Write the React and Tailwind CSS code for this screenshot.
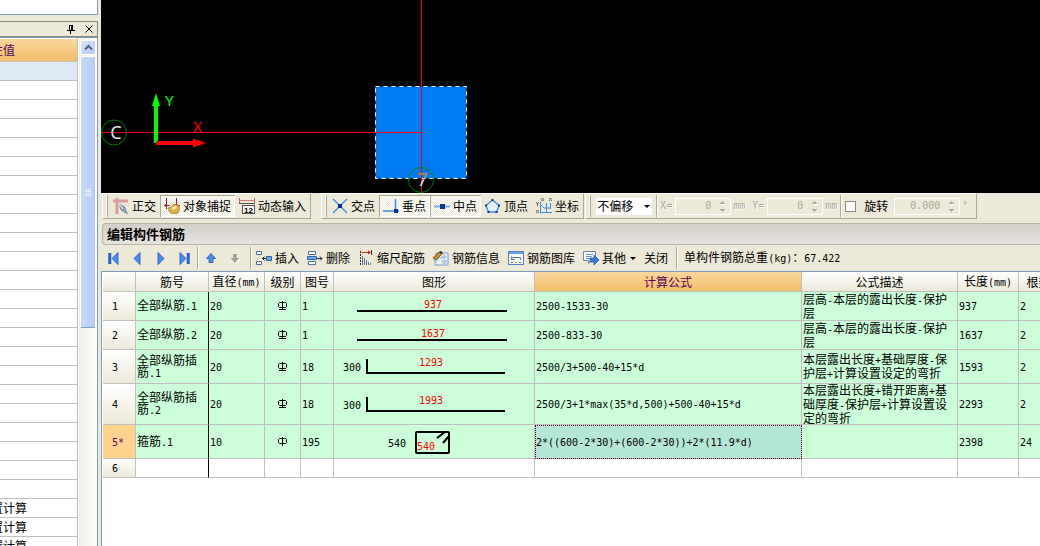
import React, { useState } from "react";

// Latin characters are set half as wide as the Chinese ones
function Txt({ children }) {
  return children
    .split(/([\x20-\x7e]+)/)
    .filter((part) => part !== "")
    .map((part, i) =>
      /^[\x20-\x7e]/.test(part) ? (
        <span key={i} className="font-['DejaVu_Sans_Mono',monospace] text-[10px]">
          {part}
        </span>
      ) : (
        part
      )
    );
}

function Icon({ children }) {
  return (
    <svg className="w-4 h-4 shrink-0" viewBox="0 0 16 16" fill="none" aria-hidden="true">
      {children}
    </svg>
  );
}

const icons = {
  ortho: (
    <Icon>
      <path d="M0 3H15M4 0V16" stroke="#dc9a9a" strokeWidth="3" />
      <path d="M6 6l6 3 1 4 2 3-4-2-3-2z" fill="#8fa3b8" stroke="#5f7488" strokeWidth=".6" />
      <path d="M6 6l4 5" stroke="#fff" />
    </Icon>
  ),
  snap: (
    <Icon>
      <path d="M2.500 0V11M12.500 0V9M0 7.500H6M9 7.500H16" stroke="#8c2f2f" />
      <path d="M1 6l3 1.500-3 1.500zM14 6l-3 1.500 3 1.500z" fill="#8c2f2f" />
      <path d="M4 10l3-1 3-3 4 1 2 3-2 5-6 1-3-3z" fill="#d9b44a" stroke="#9b7a22" strokeWidth=".7" />
      <path d="M7 10l4-2 2 1-3 3z" fill="#f7e9a8" />
    </Icon>
  ),
  dyn: (
    <Icon>
      <path d="M.5 0V6M15.500 0V6" stroke="#c06060" />
      <path d="M0 2.500H16" stroke="#d27c7c" />
      <path d="M0 5.500H16" stroke="#555" />
      <rect x="3.500" y="7.500" width="12" height="8" fill="#f4f4f4" stroke="#555" />
      <text x="5" y="14.500" fontSize="8" fontWeight="bold" fontFamily="Liberation Sans, sans-serif" fill="#000">
        12
      </text>
    </Icon>
  ),
  cross: (
    <Icon>
      <path d="M1 1l14 14M15 1L1 15" stroke="#3a8be0" strokeWidth="1.300" />
      <rect x="6" y="6" width="4" height="4" fill="#0b2f8a" />
    </Icon>
  ),
  perp: (
    <Icon>
      <path d="M0 13H16M12.500 1V13" stroke="#3a8be0" strokeWidth="1.500" />
      <rect x="11" y="11" width="4" height="4" fill="#0b2f8a" />
    </Icon>
  ),
  mid: (
    <Icon>
      <path d="M0 8.500H16" stroke="#6fb0f0" strokeWidth="2" />
      <rect x="6" y="6" width="5" height="5" fill="#0b2f8a" />
    </Icon>
  ),
  vertex: (
    <Icon>
      <path d="M7.500 2L14 7.500 11.500 14H3.500L1 7.500z" stroke="#3a8be0" strokeWidth="1.300" fill="#e4f1fd" />
      <path d="M6.500 1h2v2h-2zM13 6.500h2v2h-2zM10.500 13h2v2h-2zM2.500 13h2v2h-2zM0 6.500h2v2H0z" fill="#0b2f8a" />
    </Icon>
  ),
  coord: (
    <Icon>
      <path d="M4.500 4V15.500M4 14.500H16M4 6l4 4h7M10.500 5V14M14.500 5V11" stroke="#3a8be0" />
      <path d="M0 4l1.500 2L3 4M1.500 6v2M13 0l3 3M16 0l-3 3" stroke="#444" strokeWidth=".8" />
      <circle cx="6.500" cy="1.500" r="1.200" stroke="#444" strokeWidth=".8" />
      <circle cx="1.500" cy="13.500" r="1.200" stroke="#444" strokeWidth=".8" />
    </Icon>
  ),
  first: (
    <Icon>
      <path d="M4 3v11M5.500 3v11" stroke="#2a5fd0" strokeWidth="1.500" />
      <path d="M13 2.500v12L7 8.500z" fill="#4a8df0" stroke="#1c4fc0" strokeWidth=".8" />
    </Icon>
  ),
  prev: (
    <Icon>
      <path d="M11 2.500v12L5 8.500z" fill="#4a8df0" stroke="#1c4fc0" strokeWidth=".8" />
    </Icon>
  ),
  next: (
    <Icon>
      <path d="M5 2.500v12l6-6z" fill="#4a8df0" stroke="#1c4fc0" strokeWidth=".8" />
    </Icon>
  ),
  last: (
    <Icon>
      <path d="M12 3v11M10.500 3v11" stroke="#2a5fd0" strokeWidth="1.500" />
      <path d="M3 2.500v12l6-6z" fill="#4a8df0" stroke="#1c4fc0" strokeWidth=".8" />
    </Icon>
  ),
  up: (
    <Icon>
      <path d="M8 3.500l4.500 5H10v4H6v-4H3.500z" fill="#4a8df0" stroke="#1c4fc0" strokeWidth=".8" />
    </Icon>
  ),
  down: (
    <Icon>
      <path d="M9 14l4.500-5H11V5H7v4H4.500z" fill="#fff" />
      <path d="M8 13l4.500-5H10V4H6v4H3.500z" fill="#a6a294" />
    </Icon>
  ),
  insert: (
    <Icon>
      <path d="M.5 1.500h5v3h-5zM.5 11.500h5v3h-5z" fill="#fff" stroke="#4c6f9c" />
      <path d="M6 8.500h4M8.500 6.500l-2 2 2 2" stroke="#222" />
      <path d="M10.500 6.500h5v4h-5z" fill="#6ea8f0" stroke="#2b5fb0" />
    </Icon>
  ),
  remove: (
    <Icon>
      <path d="M1.500 1.500h7v3h-7zM1.500 11.500h7v3h-7z" fill="#fff" stroke="#4c6f9c" />
      <path d="M.5 6.500h9v3h-9z" fill="#6ea8f0" stroke="#2b5fb0" />
      <path d="M10 8.500h5M13 6.500l2 2-2 2" stroke="#222" />
    </Icon>
  ),
  scale: (
    <Icon>
      <path d="M2.500 1V15" stroke="#333" strokeDasharray="2 1" />
      <path d="M4 2.500h8" stroke="#c02a10" />
      <path d="M10 .5l3 2-3 2z" fill="#c02a10" />
      <path d="M13.500 0v5" stroke="#333" />
      <path d="M4.500 6v9M6.500 8v7M8.500 10v5M10.500 12v3M12.500 13v2" stroke="#5a7a9a" />
    </Icon>
  ),
  info: (
    <Icon>
      <path d="M3 3h12v12H2V8z" fill="#eef4fb" stroke="#7f9cc4" />
      <path d="M3 12l4-5 2 2M8 7h6M8 11h6M11 4v10" stroke="#8fb3e0" />
      <path d="M0 8l6-6 3 2-6 6z" fill="#c58b3a" stroke="#5a3a10" strokeWidth=".7" />
      <path d="M6 2l2-1 2 2-1 1z" fill="#222" />
      <path d="M10 9l4 2-1 4H9z" fill="#b9cbe2" />
    </Icon>
  ),
  library: (
    <Icon>
      <rect x=".5" y="1.500" width="15" height="13" fill="#f6f9fd" stroke="#4f83c4" />
      <path d="M1 3h14" stroke="#6aa0e0" strokeWidth="2" />
      <path d="M3.500 10V6.500M3 7.500h9.500V10M3 9.500h4" stroke="#777" />
      <path d="M3 12.500h2" stroke="#d04040" />
      <path d="M7 12.500h2" stroke="#e0a030" />
      <path d="M11 12.500h2" stroke="#40a060" />
    </Icon>
  ),
  other: (
    <Icon>
      <path d="M.5 1.500h12v9h-4l-3 3v-3h-5z" fill="#f6f9fd" stroke="#6f86a8" />
      <path d="M3 4.500h7M3 6.500h6M3 8.500h4" stroke="#7a9ac8" />
      <path d="M7 8h4V5l5 5-5 5v-3H7z" fill="#3b78dc" stroke="#1d4fae" strokeWidth=".7" />
    </Icon>
  ),
};

function ToolButton({ icon, label, pressed, menu }) {
  return (
    <button
      aria-pressed={pressed}
      className={
        pressed
          ? "flex items-center gap-[3px] h-[22px] px-1 whitespace-nowrap shadow-[inset_1px_1px_#aca899,inset_-1px_-1px_#fff] bg-[repeating-conic-gradient(#fff_0_25%,#ece9d8_0_50%)] bg-[length:2px_2px]"
          : "flex items-center gap-[3px] h-[22px] px-1 whitespace-nowrap"
      }
    >
      {icon && icons[icon]}
      {label}
      {menu && <span className="border-x-[3px] border-t-[3px] border-x-transparent border-t-black ml-px" />}
    </button>
  );
}

function NavButton({ icon, label, disabled }) {
  return (
    <button aria-label={label} disabled={disabled} className="flex items-center justify-center w-6 h-[22px]">
      {icons[icon]}
    </button>
  );
}

function Separator() {
  return <div className="w-[2px] h-[22px] bg-[#aca899] border-r border-white shrink-0" />;
}

function ToolGroup({ children }) {
  return (
    <div className="flex items-center h-[26px] pl-[3px] border-t border-l border-t-white border-l-white border-r border-b border-r-[#aca899] border-b-[#aca899] shrink-0">
      <div className="w-[2px] h-[22px] bg-[#aca899] border-l border-white mr-px" />
      {children}
    </div>
  );
}

function NumberBox({ id, value, wide }) {
  return (
    <div
      className={
        wide
          ? "flex items-center w-[66px] h-[17px] pr-1 border border-white shrink-0"
          : "flex items-center w-14 h-[17px] pr-1 border border-white shrink-0"
      }
    >
      <input
        id={id}
        disabled
        defaultValue={value}
        className="flex-1 min-w-0 pr-2 bg-transparent text-right text-[#aca899] font-['DejaVu_Sans_Mono',monospace] text-[10px] leading-3"
      />
      <svg className="w-[7px] h-[13px] shrink-0" viewBox="0 0 7 13" aria-hidden="true">
        <path d="M1.500 5L4.500 2 7 5zM1.500 9h5.500L4.500 12z" fill="#fff" />
        <path d="M.5 4L3.500 1l3 3zM.5 9l3 3 3-3z" fill="#aca899" />
      </svg>
    </div>
  );
}

// labels of the inactive fields
const dimmed = "text-[#aca899] [text-shadow:1px_1px_#fff] font-['DejaVu_Sans_Mono',monospace] text-[10px]";

function PropertyPanel() {
  return (
    <aside className="flex flex-col w-[98px] shrink-0 mr-[3px]">
      <div className="h-[15px] shrink-0 bg-white border-r border-b border-[#7f9db9]" />
      <div className="flex items-center justify-end gap-[10px] h-4 mt-[6px] shrink-0 pr-1 border-y border-r border-[#8c897c]">
        <button aria-label="固定">
          <svg className="w-2 h-[9px]" viewBox="0 0 8 9" fill="none">
            <path d="M2.500 0V5.500M2 .5H6M5.500 0V5.500M4.500 0V5.500M0 5.500H8M3.500 6V9" stroke="#000" />
          </svg>
        </button>
        <button aria-label="关闭面板">
          <svg className="w-2 h-2" viewBox="0 0 8 8" fill="none">
            <path d="M.5 .5l7 7M7.500 .5l-7 7" stroke="#000" />
          </svg>
        </button>
      </div>
      <div className="flex flex-1 min-h-0 border-t border-r border-[#7f9db9] bg-white overflow-hidden">
        <div className="w-[78px] shrink-0 border-r border-[#c0c0c0]">
          <div className="flex items-center h-[23px] mt-px border-b border-[#c0c0c0] bg-linear-to-b from-[#f9d79e] to-[#f2be68] text-[#5a005a]">
            <span className="flex justify-end w-[15px] overflow-hidden whitespace-nowrap">性值</span>
          </div>
          <div className="h-[19px] border-b border-[#c0c0c0] bg-[#dfe9f5]" />
          {Array.from({ length: 22 }).map((_, i) => (
            <div key={i} className="h-[19px] border-b border-[#c0c0c0]" />
          ))}
          {[1, 2, 3].map((i) => (
            <div key={i} className="flex items-center h-[19px] border-b border-[#c0c0c0]">
              <span className="flex justify-end w-[27px] overflow-hidden whitespace-nowrap">置计算</span>
            </div>
          ))}
        </div>
        <div className="flex-1 ml-px px-px pt-[2px] bg-linear-to-r from-[#efeee6] to-[#fdfdfa]">
          <button
            aria-label="向上滚动"
            className="flex items-center justify-center w-full h-[15px] rounded-xs border border-white bg-linear-to-br from-[#dbe6fe] to-[#b4cbf8]"
          >
            <svg className="w-[9px] h-[7px]" viewBox="0 0 9 7" fill="none">
              <path d="M1 5.500l3.500-3.500L8 5.500" stroke="#4d6185" strokeWidth="2" />
            </svg>
          </button>
          <div className="flex flex-col items-center justify-center gap-px h-[272px] mt-px rounded-xs border border-white border-b-[#7c9fd3] bg-linear-to-r from-[#c9d8fc] to-[#b6cbf8]">
            {[1, 2, 3, 4].map((i) => (
              <div key={i} className="w-[6px] h-px bg-[#eef4fe]" />
            ))}
          </div>
        </div>
      </div>
    </aside>
  );
}

function Drawing() {
  return (
    <svg className="block w-full h-[193px] shrink-0 bg-black" fill="none" role="img" aria-label="绘图区">
      <defs>
        <linearGradient id="seven" x1="0" y1="0" x2="0" y2="1">
          <stop offset=".45" stopColor="#d08038" />
          <stop offset=".55" stopColor="#e8e8e8" />
        </linearGradient>
      </defs>
      <rect x="274.500" y="86.500" width="91" height="92" fill="#007bf2" />
      <rect x="274.500" y="86.500" width="91" height="92" stroke="#fff" strokeDasharray="4 4" />
      <path d="M0 132.500H321M320.500 0V193" stroke="#f00014" />
      <circle cx="13" cy="132.500" r="12.500" stroke="#008000" />
      <text x="15" y="139" fontSize="18" textAnchor="middle" fill="#e4e4e4" fontFamily="Noto Sans, sans-serif">
        C
      </text>
      <circle cx="320" cy="180" r="12.500" stroke="#008000" />
      <text x="321.500" y="186" fontSize="18" textAnchor="middle" fill="url(#seven)" fontFamily="Noto Sans, sans-serif">
        7
      </text>
      <path d="M55 143V104" stroke="#00ff00" strokeWidth="4" />
      <path d="M51 106l4-13 4 13z" fill="#00ff00" />
      <path d="M55 143H94" stroke="#ff0000" strokeWidth="4" />
      <path d="M92 138.500l13 4.500-13 4.500z" fill="#ff0000" />
      <text x="64" y="106" fontSize="14" fill="#00ff00" fontFamily="Lato, sans-serif">
        Y
      </text>
      <text x="92" y="132" fontSize="14" fill="#ff0000" fontFamily="Lato, sans-serif">
        X
      </text>
    </svg>
  );
}

function SnapToolbar() {
  const [offset, setOffset] = useState("none");

  return (
    <div className="flex items-start h-[30px] pl-px shrink-0">
      <ToolGroup>
        <ToolButton icon="ortho" label="正交" />
        <ToolButton icon="snap" label="对象捕捉" pressed />
        <ToolButton icon="dyn" label="动态输入" />
      </ToolGroup>
      <div className="w-[10px] shrink-0" />
      <ToolGroup>
        <ToolButton icon="cross" label="交点" />
        <ToolButton icon="perp" label="垂点" pressed />
        <ToolButton icon="mid" label="中点" pressed />
        <ToolButton icon="vertex" label="顶点" />
        <ToolButton icon="coord" label="坐标" />
      </ToolGroup>
      <div className="w-px shrink-0" />
      <ToolGroup>
        <div className="flex items-center w-14 h-[17px] bg-white mx-1">
          <select
            aria-label="偏移方式"
            value={offset}
            onChange={(e) => setOffset(e.target.value)}
            className="w-full pl-px appearance-none text-[12px] leading-4"
          >
            <option value="none">不偏移</option>
            <option value="ortho">正交</option>
            <option value="polar">极坐标</option>
          </select>
          <span className="pointer-events-none border-x-[3px] border-t-[3px] border-x-transparent border-t-black mr-[2px]" />
        </div>
        <Separator />
        <label htmlFor="offset-x" className={`${dimmed} ml-[2px] mr-[3px]`}>
          X=
        </label>
        <NumberBox id="offset-x" value="0" />
        <span className={`${dimmed} ml-[2px] mr-[7px]`}>mm</span>
        <label htmlFor="offset-y" className={`${dimmed} mr-[3px]`}>
          Y=
        </label>
        <NumberBox id="offset-y" value="0" />
        <span className={`${dimmed} ml-[2px] mr-[3px]`}>mm</span>
        <Separator />
        <label className="flex items-center gap-2 ml-[3px] mr-[6px]">
          <input
            type="checkbox"
            className="appearance-none w-[11px] h-[11px] bg-white border border-[#8c897c]"
          />
          旋转
        </label>
        <NumberBox id="angle" value="0.000" wide />
        <label htmlFor="angle" aria-label="旋转角度" className={`${dimmed} ml-[2px] mr-2`}>
          °
        </label>
      </ToolGroup>
    </div>
  );
}

function RebarToolbar() {
  return (
    <div className="flex items-center h-[26px] shrink-0 whitespace-nowrap">
      <NavButton icon="first" label="第一条" />
      <NavButton icon="prev" label="上一条" />
      <NavButton icon="next" label="下一条" />
      <NavButton icon="last" label="最后一条" />
      <Separator />
      <NavButton icon="up" label="上移" />
      <NavButton icon="down" label="下移" disabled />
      <div className="w-[3px]" />
      <Separator />
      <ToolButton icon="insert" label="插入" />
      <ToolButton icon="remove" label="删除" />
      <ToolButton icon="scale" label="缩尺配筋" />
      <ToolButton icon="info" label="钢筋信息" />
      <ToolButton icon="library" label="钢筋图库" />
      <ToolButton icon="other" label="其他" menu />
      <ToolButton label="关闭" />
      <div className="w-1" />
      <Separator />
      <span className="ml-[6px]">
        <Txt>单构件钢筋总重(kg)：67.422</Txt>
      </span>
    </div>
  );
}

const svgText = "font-['DejaVu_Sans_Mono',monospace] text-[10px]";

function StraightBar({ length }) {
  return (
    <svg className="block w-full h-7">
      <path d="M23 19H173" stroke="#000" strokeWidth="2" />
      <text x="99" y="16" textAnchor="middle" fill="#f00" className={svgText}>
        {length}
      </text>
    </svg>
  );
}

function BentBar({ length, hook }) {
  return (
    <svg className="block w-full h-[33px]">
      <path d="M33 9V23H171" stroke="#000" strokeWidth="2" fill="none" />
      <text x="97" y="16" textAnchor="middle" fill="#f00" className={svgText}>
        {length}
      </text>
      <text x="9" y="21" className={svgText}>
        {hook}
      </text>
    </svg>
  );
}

function Stirrup({ size }) {
  return (
    <svg className="block w-full h-[33px]">
      <rect x="82" y="7" width="33" height="21" rx="1" stroke="#000" strokeWidth="2" fill="none" />
      <path d="M103 13l8-6M109 18l6-7" stroke="#000" strokeWidth="2" />
      <text x="54" y="22" className={svgText}>
        {size}
      </text>
      <text x="83" y="25" fill="#f00" className={svgText}>
        {size}
      </text>
    </svg>
  );
}

function Grade({ ribbed }) {
  return (
    <svg className="block mx-auto w-[9px] h-[10px]" viewBox="0 0 9 10" fill="none" role="img" aria-label="级别">
      <path d="M1.500 1.500H7.500L8.500 2.500V5.500L7.500 6.500H1.500L.5 5.500V2.500zM4.500 0V9" stroke="#000" />
      {ribbed && <path d="M1 8.500H8" stroke="#000" />}
    </svg>
  );
}

const rows = [
  { no: "1", height: "h-[29px]", name: "全部纵筋.1", dia: "20", ribbed: true, fig: "1", shape: <StraightBar length="937" />, formula: "2500-1533-30", desc: "层高-本层的露出长度-保护层", len: "937", count: "2" },
  { no: "2", height: "h-[29px]", name: "全部纵筋.2", dia: "20", ribbed: true, fig: "1", shape: <StraightBar length="1637" />, formula: "2500-833-30", desc: "层高-本层的露出长度-保护层", len: "1637", count: "2" },
  { no: "3", height: "h-[34px]", name: "全部纵筋插筋.1", dia: "20", ribbed: true, fig: "18", shape: <BentBar length="1293" hook="300" />, formula: "2500/3+500-40+15*d", desc: "本层露出长度+基础厚度-保护层+计算设置设定的弯折", len: "1593", count: "2" },
  { no: "4", height: "h-[41px]", name: "全部纵筋插筋.2", dia: "20", ribbed: true, fig: "18", shape: <BentBar length="1993" hook="300" />, formula: "2500/3+1*max(35*d,500)+500-40+15*d", desc: "本层露出长度+错开距离+基础厚度-保护层+计算设置设定的弯折", len: "2293", count: "2" },
  { no: "5*", height: "h-[34px]", name: "箍筋.1", dia: "10", ribbed: false, fig: "195", shape: <Stirrup size="540" />, formula: "2*((600-2*30)+(600-2*30))+2*(11.9*d)", desc: "", len: "2398", count: "24", current: true },
];

const headers = ["", "筋号", "直径(mm)", "级别", "图号", "图形", "计算公式", "公式描述", "长度(mm)", "根数"];
const line = "border-r border-b border-[#c0c0c0]";
const cell = `${line} p-0 pl-px break-all`;
const rowHead = `${line} p-0 pl-[9px] text-left font-normal`;

function RebarTable() {
  return (
    <div className="flex-1 min-h-0 overflow-hidden bg-white border-t border-l border-[#7f9db9]">
      <table className="table-fixed w-[956px] ml-px border-separate border-spacing-0 leading-3">
        <colgroup>
          <col className="w-[33px]" />
          <col className="w-[73px]" />
          <col className="w-14" />
          <col className="w-9" />
          <col className="w-[33px]" />
          <col className="w-[201px]" />
          <col className="w-[267px]" />
          <col className="w-[156px]" />
          <col className="w-[61px]" />
          <col className="w-10" />
        </colgroup>
        <thead>
          <tr className="h-5">
            {headers.map((header) => (
              <th
                key={header}
                className={
                  header === "计算公式"
                    ? `${line} p-0 font-normal whitespace-nowrap text-[#5a005a] bg-linear-to-b from-[#f9d79e] to-[#f2be68]`
                    : `${line} p-0 font-normal whitespace-nowrap bg-linear-to-b from-white to-[#ece9d8]`
                }
              >
                <Txt>{header}</Txt>
              </th>
            ))}
          </tr>
        </thead>
        <tbody>
          {rows.map((row) => (
            <tr key={row.no} className={`${row.height} bg-[#ccffd9]`}>
              <th
                className={
                  row.current
                    ? `${rowHead} bg-[#ffd38c] text-[#5a005a]`
                    : `${rowHead} bg-linear-to-b from-white to-[#ece9d8]`
                }
              >
                <Txt>{row.no}</Txt>
              </th>
              <td className={`${cell} border-r-black`}>
                <Txt>{row.name}</Txt>
              </td>
              <td className={cell}>
                <Txt>{row.dia}</Txt>
              </td>
              <td className={`${line} p-0`}>
                <Grade ribbed={row.ribbed} />
              </td>
              <td className={cell}>
                <Txt>{row.fig}</Txt>
              </td>
              <td className={`${line} p-0`}>{row.shape}</td>
              <td
                className={
                  row.current
                    ? `${cell} bg-[#b4e7d6] outline-1 outline-dotted -outline-offset-1 outline-[#600030]`
                    : cell
                }
              >
                <Txt>{row.formula}</Txt>
              </td>
              <td className={cell}>
                <Txt>{row.desc}</Txt>
              </td>
              <td className={cell}>
                <Txt>{row.len}</Txt>
              </td>
              <td className={cell}>
                <Txt>{row.count}</Txt>
              </td>
            </tr>
          ))}
          <tr className="h-[19px]">
            <th className={`${rowHead} bg-linear-to-b from-white to-[#ece9d8]`}>
              <Txt>6</Txt>
            </th>
            <td className={`${cell} border-r-black`} />
            {headers.slice(2).map((header) => (
              <td key={header} className={cell} />
            ))}
          </tr>
        </tbody>
      </table>
    </div>
  );
}

function App() {
  return (
    <div className="flex h-screen overflow-hidden bg-[#ece9d8] text-black text-[12px] leading-4 font-['Noto_Sans_CJK_SC',sans-serif]">
      <PropertyPanel />
      <main className="flex flex-col flex-1 min-w-0 overflow-hidden">
        <Drawing />
        <SnapToolbar />
        <h2 className="flex items-center h-[22px] ml-px pl-1 shrink-0 rounded-l-sm border-y border-l border-[#b8b4a6] bg-linear-to-b from-[#d2cfc8] to-[#e6e4df] text-[13px] font-bold">
          编辑构件钢筋
        </h2>
        <RebarToolbar />
        <RebarTable />
      </main>
    </div>
  );
}

export default App;
